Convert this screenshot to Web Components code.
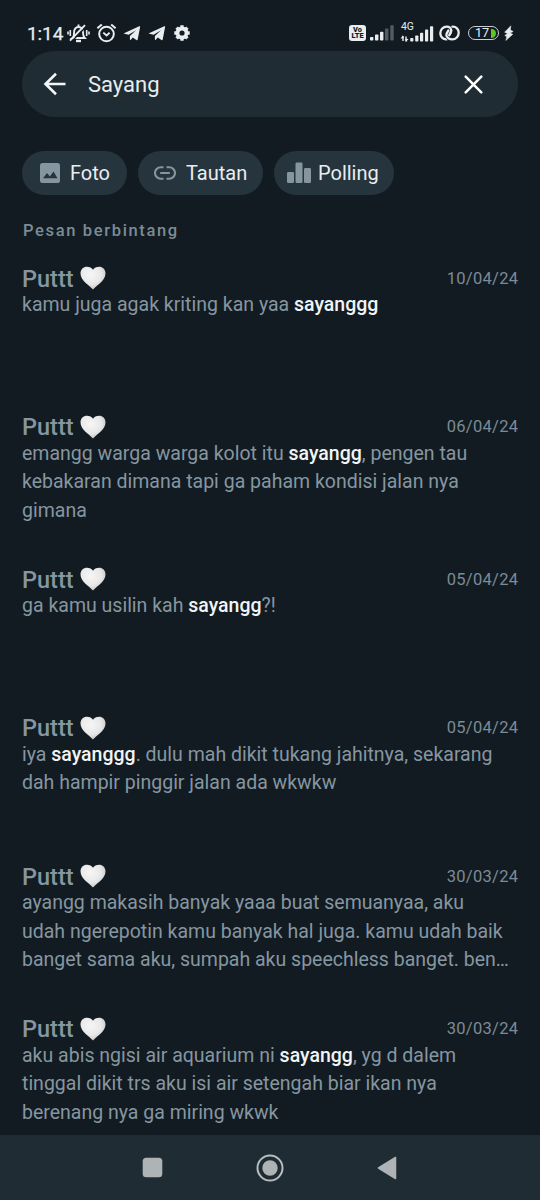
<!DOCTYPE html>
<html lang="id">
<head>
<meta charset="utf-8">
<title>Pesan berbintang</title>
<style>
html,body{margin:0;background:#121b22}
body{width:540px;height:1200px;overflow:hidden;font-family:Roboto,"Liberation Sans",sans-serif}
</style>
</head>
<body>
<starred-screen></starred-screen>
<script>
const define = (name, html, setup) => customElements.define(name, class extends HTMLElement {
  constructor() {
    super();
    this.attachShadow({ mode: 'open' }).innerHTML = html;
  }
  connectedCallback() { if (setup) setup(this, this.shadowRoot); }
});

define('status-bar', `
<style>
:host{display:flex;height:51px;box-sizing:border-box;padding:23px 26px 8px 27px;align-items:center;color:#e9edef}
svg{display:block;flex:none}
.time{font-size:19px;line-height:20px;width:39px;white-space:nowrap;padding-top:1px;letter-spacing:-.1px;-webkit-text-stroke:.25px #e9edef}
.gap{flex:1}
.lte{width:17px;height:16px;border-radius:3px;background:#e9edef;color:#121b22;font-size:7.4px;line-height:6.8px;font-weight:900;text-align:center;padding-top:1.5px;box-sizing:border-box}
.lte span{display:block}
.net{position:relative;width:34px;height:20px;margin-left:6px}
.net span{position:absolute;left:1px;top:-2px;font-size:10.4px;line-height:11px}
.net svg{margin-top:.5px}
.bat{width:31px;height:14px;box-sizing:border-box;border:1.5px solid #c9cfd2;border-radius:7px;margin-left:8px;display:flex;align-items:center;font-size:12.6px;line-height:12px;padding-left:6px;overflow:hidden}
.bat i{width:4.5px;height:9px;flex:none;background:#5cc62a;border-radius:0 5px 5px 0;margin-left:2px}
</style>
<span class="time">1:14</span>
<svg style="margin-left:1px" width="23" height="20" viewBox="0 0 23 20" fill="none" stroke="#e9edef" stroke-width="1.900"><path d="M5.500 15c1.700-1.200 1.500-3.300 1.500-5.300C7 6.400 8.600 4 11.500 4s4.500 2.300 4.500 5.500c0 2 .2 4 1.700 5.500zM11.500 4V1.500"/><path stroke="#121b22" stroke-width="1.400" d="M4.700 18.600 19.500 3.300"/><path stroke-width="1.900" d="m3 17.600 15-15.400"/><path d="M9 18h5" stroke-width="2.400"/><path stroke-width="1.600" d="M3.300 7v6M1 8.500v3M19.700 7v6M22 8.500v3"/></svg>
<svg style="margin-left:6px" width="21" height="20" viewBox="0 0 21 20" fill="none" stroke="#e9edef" stroke-width="2"><circle cx="10.500" cy="11" r="7.300"/><path d="m1.400 5.300 4.400-3.800M19.600 5.300l-4.400-3.800"/><path stroke-width="1.900" d="m7.300 9.600 3.300 2.900 3-2.700"/></svg>
<svg style="margin-left:6px" width="18" height="17" viewBox="0 0 18 17" fill="#e9edef"><path d="M.5 8.500 16.200 1.300q1.100-.4.900.8l-2.400 12.500q-.3 1.100-1.300.5L9.800 12.500l-2 2.300q-.8.7-.9-.5V10.900l6.100-5.700-7.400 4.500z"/></svg>
<svg style="margin-left:7px" width="18" height="17" viewBox="0 0 18 17" fill="#e9edef"><path d="M.5 8.500 16.200 1.300q1.100-.4.900.8l-2.400 12.500q-.3 1.100-1.300.5L9.800 12.500l-2 2.300q-.8.7-.9-.5V10.900l6.100-5.700-7.400 4.500z"/></svg>
<svg style="margin-left:7px" width="18" height="18" viewBox="0 0 18 18"><circle cx="9" cy="9" r="4.500" fill="none" stroke="#e9edef" stroke-width="3.800"/><path stroke="#e9edef" stroke-width="3.400" d="M9 1.300v2.400M9 14.300v2.400M1.300 9h2.400M14.300 9h2.400M3.600 3.600l1.600 1.600M12.800 12.800l1.600 1.600M14.400 3.600l-1.600 1.600M5.200 12.800l-1.600 1.600"/></svg>
<span class="gap"></span>
<div class="lte"><span>Vo</span><span>LTE</span></div>
<svg style="margin-left:4px" width="24" height="16" viewBox="0 0 24 16" fill="#e9edef"><rect y="12" width="3.400" height="3.500" rx=".8"/><rect x="5" y="9.500" width="3.400" height="6" rx=".8"/><rect x="10" y="6.700" width="3.400" height="8.800" rx=".8"/><g fill="#535c62"><rect x="15" y="3.500" width="3.400" height="12" rx=".8"/><rect x="20.300" y=".3" width="3.400" height="15.200" rx=".8"/></g></svg>
<div class="net"><span>4G</span><svg width="34" height="20" viewBox="0 0 34 20" fill="#e9edef"><path d="M3 12v5M6 12.500v5" stroke="#e9edef" stroke-width="1.400"/><path d="M.6 14.400 3 11.300l.7 3zM5.300 14.800l.7 3.200 2.500-3z"/><rect x="10.200" y="14" width="3.200" height="3.500" rx=".8"/><rect x="15.200" y="11.500" width="3.200" height="6" rx=".8"/><rect x="20" y="8.700" width="3.200" height="8.800" rx=".8"/><rect x="25" y="5.500" width="3.200" height="12" rx=".8"/><rect x="30" y="2.300" width="3.200" height="15.200" rx=".8"/></svg></div>
<svg style="margin-left:5px" width="21" height="16" viewBox="0 0 21 16" fill="none" stroke="#e9edef" stroke-width="2.300" stroke-linecap="round"><path d="M7.600 14.300C3.800 14.500 1.300 11.800 1.300 8.300 1.300 4.600 4.200 1.600 7.700 1.600c2.700 0 4.500 1.700 4.500 3.900 0 1.900-.9 3.100-2 4.700"/><path d="M13.400 1.700c3.800-.2 6.300 2.500 6.300 6 0 3.700-2.900 6.700-6.400 6.700-2.700 0-4.700-1.700-4.700-3.900 0-1.900.9-3.100 2-4.700" stroke="#121b22" stroke-width="4" stroke-dasharray="0 21 7 40" stroke-linecap="butt"/><path d="M12.200 5.500c0 1.900-.9 3.100-2 4.700"/><path d="M13.400 1.700c3.800-.2 6.300 2.500 6.300 6 0 3.700-2.900 6.700-6.400 6.700-2.700 0-5.900-1.700-5.900-4.200 0-1.900.9-3.100 2-4.700"/></svg>
<div class="bat">17<i></i></div>
<svg style="margin:0 0 0 5px" width="10" height="16" viewBox="0 0 10 16" fill="#e9edef" stroke="#e9edef" stroke-width=".5"><path d="M6.800.8.600 7.200l3 1.200L.8 10.400l2 1.300L1.800 15.500l7-6.200-2.800-1.200L9.200 6.500 6.400 4.900z"/></svg>`);

define('search-field', `
<style>
:host{display:flex;align-items:center;height:66px;margin:0 22px;border-radius:33px;background:#202c33;padding:0 35px 0 21px;box-sizing:border-box}
svg{display:block;flex:none}
.q{flex:1;margin-left:22px;padding-top:2px;font-size:22px;line-height:28px;color:#e9edef}
</style>
<svg width="23" height="24" viewBox="0 0 23 24" fill="none" stroke="#f3f6f7" stroke-width="2.600"><path d="M22.500 12H3M13 1.800 2.500 12 13 22.200"/></svg>
<div class="q"><slot></slot></div>
<svg width="19" height="19" viewBox="0 0 19 19" fill="none" stroke="#fff" stroke-width="2.500" stroke-linecap="round"><path d="m1.700 1.700 15.600 15.600M17.300 1.700 1.700 17.300"/></svg>`);

define('filter-chip', `
<style>
:host{display:flex;align-items:center;height:44px;border-radius:22px;background:#26343d;box-sizing:border-box;padding-left:var(--lead);width:var(--w)}
.t{margin-left:var(--gap);font-size:20px;line-height:24px;color:#e9edef;white-space:nowrap}
::slotted(svg){display:block;flex:none}
</style>
<slot name="icon"></slot><span class="t"><slot></slot></span>`);

define('message-row', `
<style>
:host{display:block;min-height:148.500px;box-sizing:border-box;padding-bottom:41px}
.head{display:flex;align-items:center;height:26px}
.name{font-size:23.500px;font-weight:500;color:#8696a0;line-height:26px;width:58px;padding-top:1px}
svg{display:block}
.date{margin-left:auto;font-size:16.500px;color:#7c8b95;letter-spacing:.28px;margin-right:-.28px}
.body{font-size:19.500px;line-height:28.500px;color:#8696a0;white-space:nowrap}
::slotted(b){font-weight:500;color:#f1f4f5}
</style>
<div class="head"><span class="name">Puttt</span>
<svg width="26" height="24" viewBox="0 0 26 24"><defs><radialGradient id="g" cx=".4" cy=".35" r=".7"><stop offset="0" stop-color="#f6f6f6"/><stop offset=".6" stop-color="#e8e8e8"/><stop offset="1" stop-color="#c4c4c4"/></radialGradient></defs><path fill="url(#g)" d="M13 23.400C9.600 19.800.5 14.700.5 7.600.5 3.300 3.400.8 6.900.8c2.700 0 4.900 1.200 6.100 3C14.200 2 16.400.8 19.100.8c3.500 0 6.400 2.500 6.400 6.800 0 7.100-9.100 12.200-12.500 15.800z"/></svg>
<span class="date"></span></div>
<div class="body"><slot></slot></div>`, (el, root) => {
  root.querySelector('.date').textContent = el.getAttribute('date');
});

define('nav-bar', `
<style>
:host{display:flex;height:65px;flex:none;background:#202c33;align-items:center;padding:0 143px 0 142px;justify-content:space-between}
svg{display:block}
</style>
<svg width="21" height="21"><rect x=".7" y=".7" width="19.600" height="19.600" rx="3.500" fill="#aeb3b6"/></svg>
<svg width="28" height="28"><circle cx="14" cy="14" r="12.500" fill="none" stroke="#b4bdc2" stroke-width="2"/><circle cx="14" cy="14" r="7.700" fill="#aeb3b6"/></svg>
<svg width="20" height="24"><path d="M1.500 12 18.500 1.500v21z" fill="#aeb3b6" stroke="#aeb3b6" stroke-width="1.500" stroke-linejoin="round"/></svg>`);

define('starred-screen', `
<style>
:host{display:flex;flex-direction:column;width:540px;height:1200px;background:#121b22;overflow:hidden}
.chips{display:flex;gap:11px;margin:33.500px 22px 0}
h2{margin:24px 23px 0;font-size:16.500px;line-height:24px;font-weight:500;letter-spacing:1.650px;color:#7c8b95}
.list{flex:1;min-height:0;overflow:hidden;padding:22.500px 22px 0}
</style>
<status-bar></status-bar>
<search-field>Sayang</search-field>
<div class="chips">
<filter-chip style="--w:104.500px;--lead:18px;--gap:10px"><svg slot="icon" width="20" height="20" viewBox="0 0 20 20"><rect width="20" height="20" rx="2.500" fill="#8696a0"/><path d="M3 15.300 7 10l2.800 3.400L13.500 8.500l4 6.800z" fill="#26343d"/></svg>Foto</filter-chip>
<filter-chip style="--w:125.500px;--lead:16.500px;--gap:10px"><svg slot="icon" width="22" height="14" viewBox="0 0 22 14" fill="none" stroke="#8696a0" stroke-width="2.100"><path d="M9.500 1.300H6.700a5.700 5.700 0 0 0 0 11.400h2.800M12.500 1.300h2.800a5.700 5.700 0 0 1 0 11.400h-2.800M6.200 7h9.600"/></svg>Tautan</filter-chip>
<filter-chip style="--w:120px;--lead:12.500px;--gap:7.500px"><svg slot="icon" width="24" height="22" viewBox="0 0 24 22" fill="#8696a0"><rect y="10" width="7" height="11" rx="1.200"/><rect x="8.500" y=".5" width="7" height="20.500" rx="1.200"/><rect x="17" y="6" width="7" height="15" rx="1.200"/></svg>Polling</filter-chip>
</div>
<h2>Pesan berbintang</h2>
<div class="list">
<message-row date="10/04/24">kamu juga agak kriting kan yaa <b>sayanggg</b></message-row>
<message-row date="06/04/24">emangg warga warga kolot itu <b>sayangg</b>, pengen tau<br>kebakaran dimana tapi ga paham kondisi jalan nya<br>gimana</message-row>
<message-row date="05/04/24">ga kamu usilin kah <b>sayangg</b>?!</message-row>
<message-row date="05/04/24">iya <b>sayanggg</b>. dulu mah dikit tukang jahitnya, sekarang<br>dah hampir pinggir jalan ada wkwkw</message-row>
<message-row date="30/03/24">ayangg makasih banyak yaaa buat semuanyaa, aku<br>udah ngerepotin kamu banyak hal juga. kamu udah baik<br>banget sama aku, sumpah aku speechless banget. ben…</message-row>
<message-row date="30/03/24">aku abis ngisi air aquarium ni <b>sayangg</b>, yg d dalem<br>tinggal dikit trs aku isi air setengah biar ikan nya<br>berenang nya ga miring wkwk</message-row>
</div>
<nav-bar></nav-bar>`);
</script>
</body>
</html>
